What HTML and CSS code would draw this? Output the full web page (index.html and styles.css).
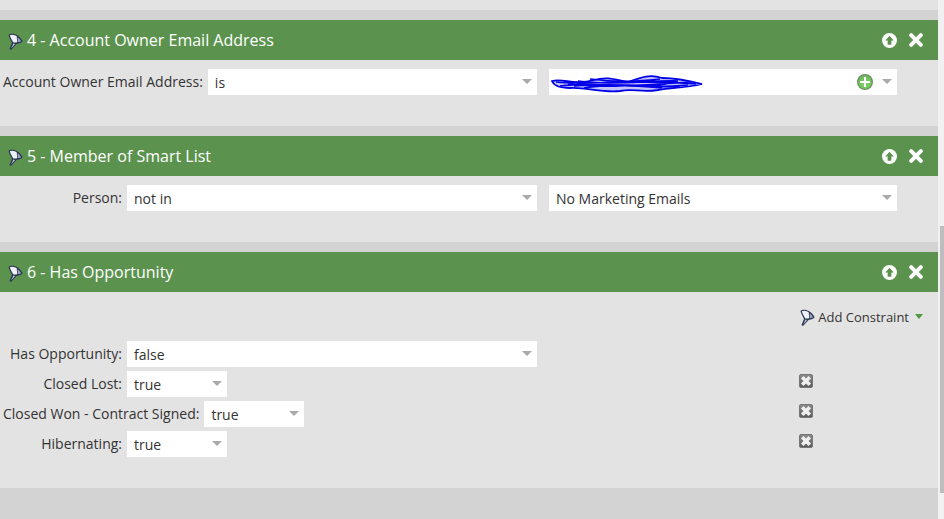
FILE: index.html
```html
<!DOCTYPE html>
<html lang="en">
<head>
    <meta charset="UTF-8">
    <title>Smart List Filters</title>
    <link rel="stylesheet" href="styles.css">
</head>
<body>
    <svg class="icon-defs" width="0" height="0">
        <linearGradient id="removeFill" x1="0" y1="0" x2="0" y2="1">
            <stop offset="0" stop-color="#8c8c8c"/>
            <stop offset="1" stop-color="#5c5c5c"/>
        </linearGradient>
        <symbol id="funnel" viewBox="0 0 18 18">
            <path d="M1.5 3 C4 0.5 12 2 15.5 9 C15.5 10.5 12 11.5 9.5 12 L4 18 L2.5 17 L5 11 C3.5 8 2 5 1.5 3 Z" fill="#2b3655"/>
            <path d="M2.8 3.2 C5 2 8 2.8 9.8 4.5 L10.2 10.2 C8.5 10.6 7.4 10.6 6.4 10.4 C4.8 8 3.4 5.5 2.8 3.2 Z" fill="#eef1f6"/>
            <path d="M10.6 5.2 C12 6.2 13.2 7.8 14.2 9.2 C13 9.8 11.8 10 10.9 10.1 Z" fill="#98a5c0"/>
            <path d="M6.6 11.6 L8 11.9 L4 16.4 Z" fill="#d5dbe8"/>
        </symbol>
        <symbol id="remove" viewBox="0 0 14 14">
            <rect x="0.5" y="0.5" width="13" height="13" rx="1.5" fill="url(#removeFill)" stroke="#767676"/>
            <path d="M4.5 4.5 L9.5 9.5 M9.5 4.5 L4.5 9.5" stroke="#f0f0f0" stroke-width="3.6" stroke-linecap="square"/>
        </symbol>
        <symbol id="up" viewBox="0 0 16 16">
            <circle cx="8" cy="8" r="8" fill="#fff"/>
            <path d="M8 3 L12.5 8 L10 8 L10 12.5 L6 12.5 L6 8 L3.5 8 Z" fill="#5b934e"/>
        </symbol>
        <symbol id="close" viewBox="0 0 14 14">
            <path d="M2.2 2.2 L11.8 11.8 M11.8 2.2 L2.2 11.8" stroke="#fff" stroke-width="4" stroke-linecap="round"/>
        </symbol>
    </svg>

    <div class="page">
        <div class="gap gap-top"></div>

        <section class="filter">
            <header class="filter-head">
                <svg class="funnel"><use href="#funnel"/></svg>
                <h2>4 - Account Owner Email Address</h2>
                <svg class="head-up"><use href="#up"/></svg>
                <svg class="head-close"><use href="#close"/></svg>
            </header>
            <div class="filter-body body-short">
                <div class="row row-owner">
                    <span class="label">Account Owner Email Address:</span>
                    <div class="select sel-op"><span>is</span><i class="arrow"></i></div>
                    <div class="select sel-value">
                        <svg class="scribble" viewBox="0 0 154 20">
                            <path d="M2 8 C14 5 24 13 44 7 C58 3 66 7 78 9 C92 4 100 1 112 5 C126 5 140 8 152 11 C136 15 118 15 108 17 C90 20 84 15 70 18 C52 20 36 14 20 15 C10 15 4 13 2 8 Z" fill="#3a3aee" fill-opacity="0.3" stroke="#0000e6" stroke-width="1.8"/>
                            <path d="M6 9 C40 13 80 5 146 11 M10 13 C50 8 90 17 138 12 M28 8 C60 13 100 7 128 8 M18 11 C60 16 100 11 142 9 M14 8 C44 15 76 10 112 15 M34 15 C64 9 96 16 120 10 M40 6 C70 10 90 8 110 6 M24 13 C60 10 90 13 130 14" fill="none" stroke="#0000e6" stroke-width="1.7"/>
                        </svg>
                        <i class="add-btn"></i>
                        <i class="arrow"></i>
                    </div>
                </div>
            </div>
        </section>

        <div class="gap"></div>

        <section class="filter">
            <header class="filter-head">
                <svg class="funnel"><use href="#funnel"/></svg>
                <h2>5 - Member of Smart List</h2>
                <svg class="head-up"><use href="#up"/></svg>
                <svg class="head-close"><use href="#close"/></svg>
            </header>
            <div class="filter-body body-short">
                <div class="row">
                    <span class="label label-wide">Person:</span>
                    <div class="select sel-person"><span>not in</span><i class="arrow"></i></div>
                    <div class="select sel-value"><span>No Marketing Emails</span><i class="arrow"></i></div>
                </div>
            </div>
        </section>

        <div class="gap"></div>

        <section class="filter">
            <header class="filter-head">
                <svg class="funnel"><use href="#funnel"/></svg>
                <h2>6 - Has Opportunity</h2>
                <svg class="head-up"><use href="#up"/></svg>
                <svg class="head-close"><use href="#close"/></svg>
            </header>
            <div class="filter-body body-tall">
                <div class="constraint-bar">
                    <svg class="funnel funnel-small"><use href="#funnel"/></svg>
                    <span>Add Constraint</span>
                    <i class="arrow-green"></i>
                </div>
                <div class="rows">
                    <div class="row">
                        <span class="label label-wide">Has Opportunity:</span>
                        <div class="select sel-main"><span>false</span><i class="arrow"></i></div>
                    </div>
                    <div class="row">
                        <span class="label label-wide">Closed Lost:</span>
                        <div class="select sel-small"><span>true</span><i class="arrow"></i></div>
                        <svg class="remove remove-a"><use href="#remove"/></svg>
                    </div>
                    <div class="row">
                        <span class="label label-auto">Closed Won - Contract Signed:</span>
                        <div class="select sel-small"><span>true</span><i class="arrow"></i></div>
                        <svg class="remove remove-b"><use href="#remove"/></svg>
                    </div>
                    <div class="row">
                        <span class="label label-wide">Hibernating:</span>
                        <div class="select sel-small"><span>true</span><i class="arrow"></i></div>
                        <svg class="remove remove-a"><use href="#remove"/></svg>
                    </div>
                </div>
            </div>
        </section>

        <div class="gap gap-bottom"></div>
    </div>

    <div class="scroll-track"><div class="scroll-thumb"></div></div>
</body>
</html>
```

FILE: styles.css
```css
html, body {
    margin: 0;
    height: 519px;
    overflow: hidden;
}
body {
    display: flex;
    background-color: #f1f1f1;
    font-family: "Open Sans", "Liberation Sans", sans-serif;
    font-size: 14px;
    color: #333;
}
.icon-defs {
    position: absolute;
}

.page {
    width: 938px;
    background-color: #d3d3d3;
    box-shadow: inset 0 10px 0 #e3e3e3;
}
.gap {
    height: 10px;
}
.gap-top {
    height: 20px;
}
.gap-bottom {
    height: 31px;
}

.filter-head {
    display: flex;
    align-items: center;
    height: 40px;
    background-color: #5b934e;
    color: #fff;
}
.filter-head h2 {
    flex: 1;
    margin: 0;
    font-size: 16px;
    font-weight: 400;
}
.funnel {
    width: 18px;
    height: 18px;
    margin: 2px 2px 0 7px;
}
.head-up {
    width: 15px;
    height: 15px;
    margin-right: 12px;
}
.head-close {
    width: 14px;
    height: 14px;
    margin-right: 15px;
}

.filter-body {
    background-color: #e3e3e3;
}
.body-short {
    height: 66px;
    padding-top: 9px;
    box-sizing: border-box;
}
.body-tall {
    height: 196px;
}

.row {
    display: flex;
    align-items: center;
    height: 26px;
}
.rows {
    display: flex;
    flex-direction: column;
    gap: 4px;
}
.label {
    margin-right: 5px;
    margin-bottom: 2px;
    white-space: nowrap;
    text-align: right;
}
.row-owner .label {
    margin-left: 3px;
}
.label-wide {
    width: 122px;
}
.label-auto {
    margin-left: 3px;
}

.select {
    display: flex;
    align-items: center;
    height: 26px;
    padding: 0 5px 0 7px;
    box-sizing: border-box;
    background-color: #fff;
}
.select span {
    flex: 1;
}
.arrow {
    width: 0;
    height: 0;
    margin-bottom: 1px;
    border-left: 5px solid transparent;
    border-right: 5px solid transparent;
    border-top: 5px solid #aaa;
}
.sel-op {
    width: 329px;
    margin-right: 12px;
}
.sel-person {
    width: 410px;
    margin-right: 12px;
}
.sel-value {
    width: 348px;
    position: relative;
    justify-content: flex-end;
}
.sel-main {
    width: 410px;
}
.sel-small {
    width: 100px;
}
.scribble {
    position: absolute;
    left: 1px;
    top: 4px;
    width: 154px;
    height: 20px;
}
.add-btn {
    width: 16px;
    height: 16px;
    margin-right: 9px;
    border-radius: 50%;
    background:
        linear-gradient(#fff, #fff) center / 10px 2px no-repeat,
        linear-gradient(#fff, #fff) center / 2px 10px no-repeat,
        radial-gradient(circle at 50% 60%, #84d86c, #5aa648);
    box-shadow: inset 0 0 0 1px #6f7f70;
}

.constraint-bar {
    display: flex;
    align-items: center;
    justify-content: flex-end;
    height: 49px;
    padding-right: 15px;
    font-size: 13px;
    box-sizing: border-box;
}
.funnel-small {
    margin: 0 1px 0 0;
}
.arrow-green {
    width: 0;
    height: 0;
    margin-left: 6px;
    border-left: 4px solid transparent;
    border-right: 4px solid transparent;
    border-top: 5px solid #4f9a3e;
}

.remove {
    width: 14px;
    height: 14px;
    margin-bottom: 6px;
}
.remove-a {
    margin-left: 572px;
}
.remove-b {
    margin-left: 495px;
}

.scroll-track {
    flex: 1;
    padding-top: 226px;
    padding-left: 2px;
}
.scroll-thumb {
    height: 267px;
    background-color: #bdbdbd;
}
```
